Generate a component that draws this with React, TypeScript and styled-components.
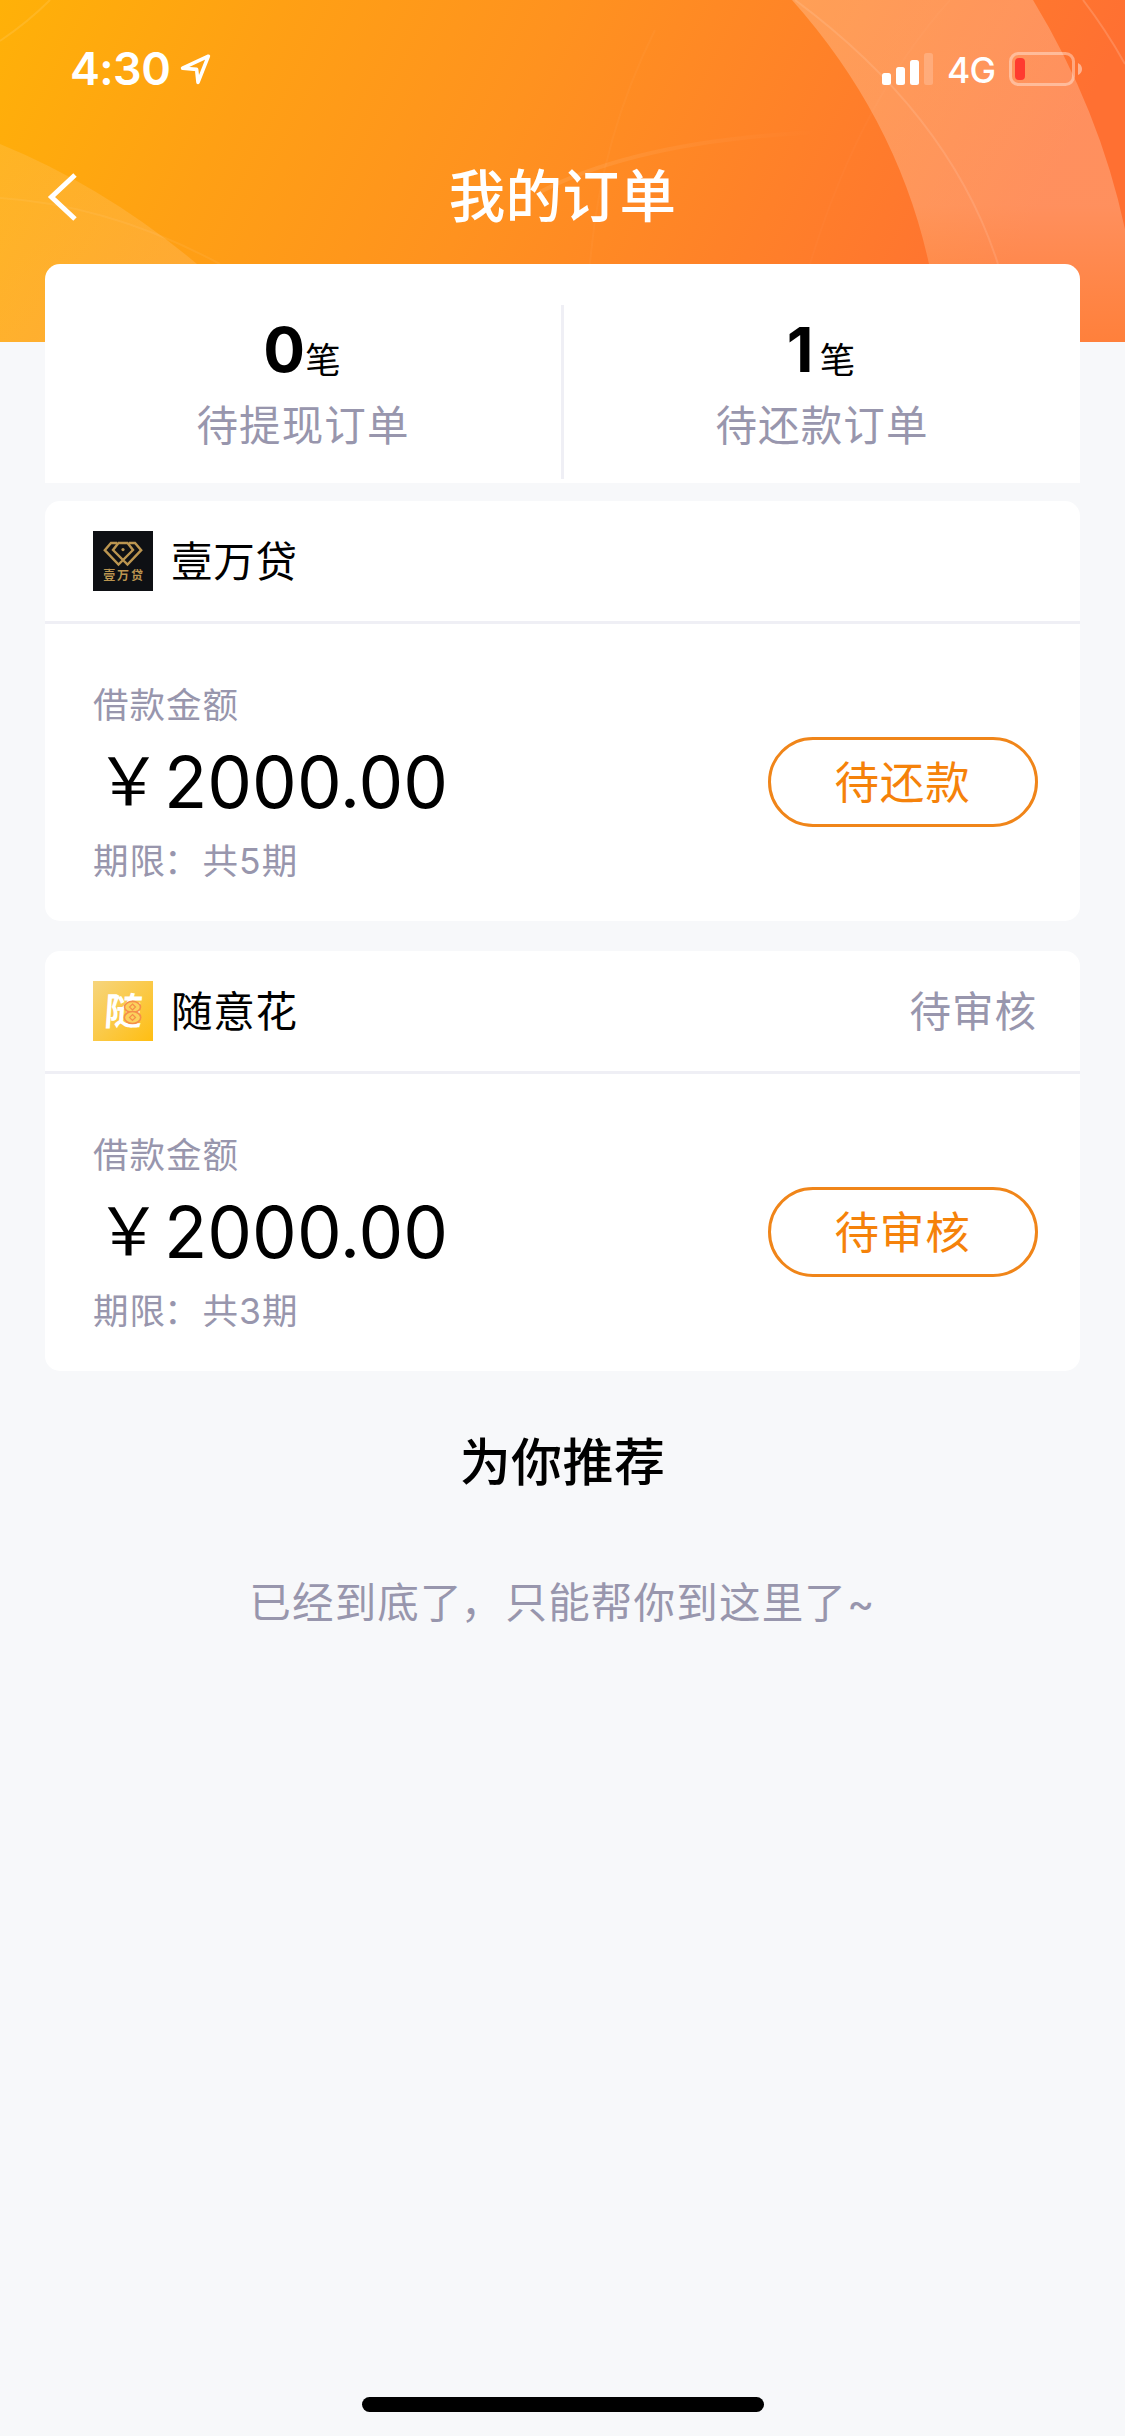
import React from "react";
import styled, { createGlobalStyle } from "styled-components";

const GlobalStyle = createGlobalStyle`
  * { box-sizing: border-box; }
  body {
    margin: 0;
    background: #f7f8fa;
    font-family: Inter, "Noto Sans CJK SC", sans-serif;
    color: #000;
  }
`;

const Page = styled.main`
  width: 1125px;
  height: 2436px;
  display: flex;
  flex-direction: column;
  background: #f7f8fa;
  overflow: hidden;
`;

const Header = styled.header`
  position: relative;
  height: 342px;
  flex: none;
  color: #fff;
`;

const HeaderArt = styled.svg`
  position: absolute;
  inset: 0;
  display: block;
`;

const StatusBar = styled.div`
  position: relative;
  height: 138px;
  display: flex;
  justify-content: space-between;
  padding: 0 43px 0 70px;
  align-items: center;
`;

const StatusGroup = styled.div`
  display: flex;
  align-items: center;
`;

const Clock = styled.span`
  font-size: 45px;
  font-weight: 600;
  line-height: 54px;
  letter-spacing: -0.6px;
  width: 110px;
`;

const Network = styled.span`
  font-size: 35.5px;
  font-weight: 450;
  line-height: 40px;
  letter-spacing: -0.8px;
  width: 62px;
  margin-left: 13px;
  padding-top: 3px;
`;

const NavBar = styled.nav`
  position: relative;
  height: 117px;
  display: grid;
  grid-template-columns: 120px 1fr 120px;
  align-items: center;
`;

const BackButton = styled.button`
  border: 0;
  padding: 0 0 0 46px;
  height: 52px;
  background: none;
  color: inherit;
  display: flex;
`;

const Title = styled.h1`
  margin: 0;
  font-size: 56.5px;
  font-weight: 500;
  line-height: 80px;
  text-align: center;
  letter-spacing: 0.4px;
`;

const Content = styled.div`
  position: relative;
  margin-top: -78px;
  padding: 0 45px;
  display: flex;
  flex-direction: column;
`;

const Summary = styled.section`
  height: 219px;
  display: grid;
  grid-template-columns: 516px 3px 516px;
  background: #fff;
  border-radius: 15px 15px 0 0;
`;

const SummaryRule = styled.div`
  margin: 41px 0 4px;
  background: #efeff5;
`;

const Stat = styled.div`
  padding-top: 54px;
  display: flex;
  flex-direction: column;
  align-items: center;
  gap: 24px;
`;

const StatValue = styled.div`
  display: flex;
  height: 63px;
  line-height: 63px;
  font-size: 62px;
  font-weight: 700;
  padding-right: 2px;
`;

const StatCount = styled.span`
  min-width: 33px;
`;

const StatUnit = styled.span`
  padding-top: 11px;
  font-size: 35.5px;
  font-weight: 400;
`;

const StatLabel = styled.div`
  font-size: 41.5px;
  line-height: 42px;
  letter-spacing: 1.1px;
  color: #9896ad;
`;

const OrderCard = styled.article<{ $gap: number }>`
  margin-top: ${(p) => p.$gap}px;
  height: 420px;
  border-radius: 15px;
  background: #fff;
`;

const OrderHead = styled.div`
  height: 123px;
  display: flex;
  align-items: center;
  padding: 0 42px 0 48px;
  border-bottom: 3px solid #efeff5;
`;

const Brand = styled.span`
  flex: 1;
  margin-left: 18px;
  padding-top: 2px;
  font-size: 41.5px;
  line-height: 60px;
  letter-spacing: 0.8px;
`;

const OrderStatus = styled.span`
  padding: 2px 1px 0 0;
  font-size: 41.5px;
  line-height: 60px;
  letter-spacing: 1px;
  color: #9896ad;
`;

const OrderBody = styled.div`
  display: flex;
  justify-content: space-between;
  align-items: flex-start;
  padding: 63px 42px 0 48px;
`;

const Figures = styled.div`
  display: flex;
  flex-direction: column;
`;

const Caption = styled.div`
  padding-top: 1px;
  font-size: 35.5px;
  line-height: 36px;
  letter-spacing: 1px;
  color: #9896ad;
`;

const Amount = styled.div`
  display: flex;
  margin: 22px 0 25px;
  font-size: 71px;
  line-height: 72px;
  height: 72px;
`;

const Currency = styled.span`
  width: 71px;
  font-size: 66px;
  line-height: 70px;
  text-align: center;
`;

const Mark = styled.span<{ $pull: number }>`
  margin-left: -${(p) => p.$pull}px;
  margin-right: ${(p) => p.$pull}px;
`;

const ActionButton = styled.button`
  width: 270px;
  height: 90px;
  margin-top: 50px;
  padding: 2px 1px 0 0;
  border: 3px solid #f08519;
  border-radius: 45px;
  background: #fff;
  color: #f5820a;
  font-family: inherit;
  font-size: 44.5px;
  line-height: 82px;
  letter-spacing: 0.9px;
`;

const SectionTitle = styled.h2`
  margin: 57px 0 0;
  font-size: 51px;
  font-weight: 500;
  line-height: 70px;
  text-align: center;
  letter-spacing: 0.4px;
`;

const EndNote = styled.p`
  margin: 75px 0 0;
  font-size: 41.5px;
  line-height: 60px;
  letter-spacing: 1.2px;
  text-align: center;
  color: #9896ad;
`;

const HomeIndicator = styled.div`
  width: 402px;
  height: 15px;
  border-radius: 8px;
  background: #000;
  margin: auto auto 24px 362px;
`;

const HeaderBackdrop = () => (
  <HeaderArt width="1125" height="342" viewBox="0 0 1125 342">
    <defs>
      <linearGradient id="sky" gradientUnits="userSpaceOnUse" x1="0" y1="0" x2="920" y2="450">
        <stop offset="0" stopColor="#ffb108" />
        <stop offset="0.25" stopColor="#ffa014" />
        <stop offset="0.5" stopColor="#ff921f" />
        <stop offset="1" stopColor="#ff7032" />
      </linearGradient>
      <linearGradient id="band" x1="0" y1="0" x2="0" y2="1">
        <stop offset="0" stopColor="#fff" stopOpacity="0.22" />
        <stop offset="0.6" stopColor="#fffaf0" stopOpacity="0.23" />
        <stop offset="1" stopColor="#ffc060" stopOpacity="0.2" />
      </linearGradient>
      <linearGradient id="hill" gradientUnits="userSpaceOnUse" x1="0" y1="144" x2="120" y2="342">
        <stop offset="0" stopColor="#ffeedd" stopOpacity="0.12" />
        <stop offset="1" stopColor="#ffe6d6" stopOpacity="0.16" />
      </linearGradient>
      <linearGradient id="arc" gradientUnits="userSpaceOnUse" x1="540" y1="0" x2="820" y2="0">
        <stop offset="0" stopColor="#fff" stopOpacity="0.1" />
        <stop offset="1" stopColor="#fff" stopOpacity="0" />
      </linearGradient>
    </defs>
    <rect width="1125" height="342" fill="url(#sky)" />
    <path d="M0 144Q105 187 197 264Q235 300 262 342H0Z" fill="url(#hill)" />
    <path d="M792 0Q897 118 929 264Q938 300 941 342H1140Q1130 160 1033 0Z" fill="url(#band)" />
    <g fill="none" stroke="#fff" strokeWidth="2">
      <path d="M0 41Q28 22 50 0" strokeOpacity="0.1" />
      <path d="M0 198Q110 205 220 264" strokeOpacity="0.06" />
      <path d="M795 0Q950 115 998 264" strokeOpacity="0.11" />
      <path d="M1083 0Q1106 30 1125 64" strokeOpacity="0.16" />
      <path d="M540 192Q640 140 820 132" stroke="url(#arc)" strokeWidth="4" />
      <path d="M950 0Q860 100 810 264" strokeOpacity="0.02" />
      <path d="M655 30Q600 140 590 264" strokeOpacity="0.03" />
    </g>
  </HeaderArt>
);

const LocationArrow = () => (
  <svg width="32" height="32" viewBox="0 0 32 32" fill="none" stroke="#fff" strokeWidth="3.6" strokeLinejoin="round">
    <path d="M28.4 3.2L2.6 15.2L16.6 16.4L18 29.4Z" />
  </svg>
);

const SignalBars = () => (
  <svg width="52" height="34" viewBox="0 0 52 34" fill="#fff">
    <rect x="0" y="21" width="9" height="12" rx="2.5" />
    <rect x="14" y="15" width="9" height="18" rx="2.5" />
    <rect x="28" y="8" width="9" height="25" rx="2.5" />
    <rect x="42" y="1" width="9" height="32" rx="2.5" opacity="0.2" />
  </svg>
);

const LowBattery = () => (
  <svg width="73" height="34" viewBox="0 0 73 34">
    <rect x="1.5" y="1.5" width="63" height="31" rx="8" fill="none" stroke="#fff" strokeOpacity="0.38" strokeWidth="3" />
    <rect x="6" y="6" width="10" height="22" rx="4" fill="#ff3b30" />
    <path d="M69 11Q73 13 73 17Q73 21 69 23Z" fill="#fff" fillOpacity="0.45" />
  </svg>
);

const GemLogo = () => (
  <svg width="60" height="60" viewBox="0 0 60 60">
    <rect width="60" height="60" fill="#0e1014" />
    <g fill="none" stroke="#bb9550" strokeWidth="2.4">
      <path d="M24 12H18L11.8 19.2L25.5 33.5L40 19L34.5 12H25.5L20 19L34.5 33.5L48.2 19.2L42 12H36" />
    </g>
    <circle cx="30" cy="18.6" r="1.6" fill="#bb9550" />
    <text x="10.2" y="49" fontSize="12" fontWeight="700" letterSpacing="1.9" fill="#bb9550" fontFamily="Noto Sans CJK SC">
      壹万贷
    </text>
  </svg>
);

const CoinLogo = () => (
  <svg width="60" height="60" viewBox="0 0 60 60">
    <defs>
      <linearGradient id="coinBg" x1="0" y1="0" x2="1" y2="1">
        <stop offset="0" stopColor="#f6d57e" />
        <stop offset="1" stopColor="#ffbe12" />
      </linearGradient>
    </defs>
    <rect width="60" height="60" fill="url(#coinBg)" />
    <text x="13.5" y="44.5" fontSize="38" fontWeight="700" fill="#fff" fontFamily="Noto Sans CJK SC" transform="skewX(-4)">
      随
    </text>
    <g fill="#fbd15c" stroke="#f58f48" strokeWidth="1.6">
      <ellipse cx="39.5" cy="26" rx="8" ry="5.6" />
      <ellipse cx="39.5" cy="36.5" rx="8.2" ry="6" />
      <path d="M39.5 23L42.5 26L39.5 29L36.5 26Z" strokeWidth="1.2" />
      <path d="M39.5 33.5L42.5 36.5L39.5 39.5L36.5 36.5Z" strokeWidth="1.2" />
    </g>
  </svg>
);

const stats = [
  { count: 0, label: "待提现订单" },
  { count: 1, label: "待还款订单" },
];

const orders = [
  { brand: "壹万贷", Logo: GemLogo, status: "", amount: "2000.00", periods: 5, action: "待还款", gap: 18 },
  { brand: "随意花", Logo: CoinLogo, status: "待审核", amount: "2000.00", periods: 3, action: "待审核", gap: 30 },
];

const StatBlock = ({ count, label }: { count: number; label: string }) => (
  <Stat>
    <StatValue>
      <StatCount>{count}</StatCount>
      <StatUnit>笔</StatUnit>
    </StatValue>
    <StatLabel>{label}</StatLabel>
  </Stat>
);

export default function App() {
  return (
    <Page>
      <GlobalStyle />
      <Header>
        <HeaderBackdrop />
        <StatusBar>
          <StatusGroup>
            <Clock>4:30</Clock>
            <LocationArrow />
          </StatusGroup>
          <StatusGroup>
            <SignalBars />
            <Network>4G</Network>
            <LowBattery />
          </StatusGroup>
        </StatusBar>
        <NavBar>
          <BackButton aria-label="返回">
            <svg width="34" height="52" viewBox="0 0 34 52" fill="none" stroke="#fff" strokeWidth="5">
              <path d="M29 4L5.5 26L29 48" />
            </svg>
          </BackButton>
          <Title>我的订单</Title>
        </NavBar>
      </Header>
      <Content>
        <Summary>
          <StatBlock {...stats[0]} />
          <SummaryRule />
          <StatBlock {...stats[1]} />
        </Summary>
        {orders.map(({ brand, Logo, status, amount, periods, action, gap }) => (
          <OrderCard key={brand} $gap={gap}>
            <OrderHead>
              <Logo />
              <Brand>{brand}</Brand>
              {status && <OrderStatus>{status}</OrderStatus>}
            </OrderHead>
            <OrderBody>
              <Figures>
                <Caption>借款金额</Caption>
                <Amount>
                  <Currency>￥</Currency>
                  {amount}
                </Amount>
                <Caption>
                  期限<Mark $pull={2}>：</Mark>共{periods}期
                </Caption>
              </Figures>
              <ActionButton>{action}</ActionButton>
            </OrderBody>
          </OrderCard>
        ))}
        <SectionTitle>为你推荐</SectionTitle>
        <EndNote>
          已经到底了<Mark $pull={2}>，</Mark>只能帮你到这里了~
        </EndNote>
      </Content>
      <HomeIndicator />
    </Page>
  );
}
